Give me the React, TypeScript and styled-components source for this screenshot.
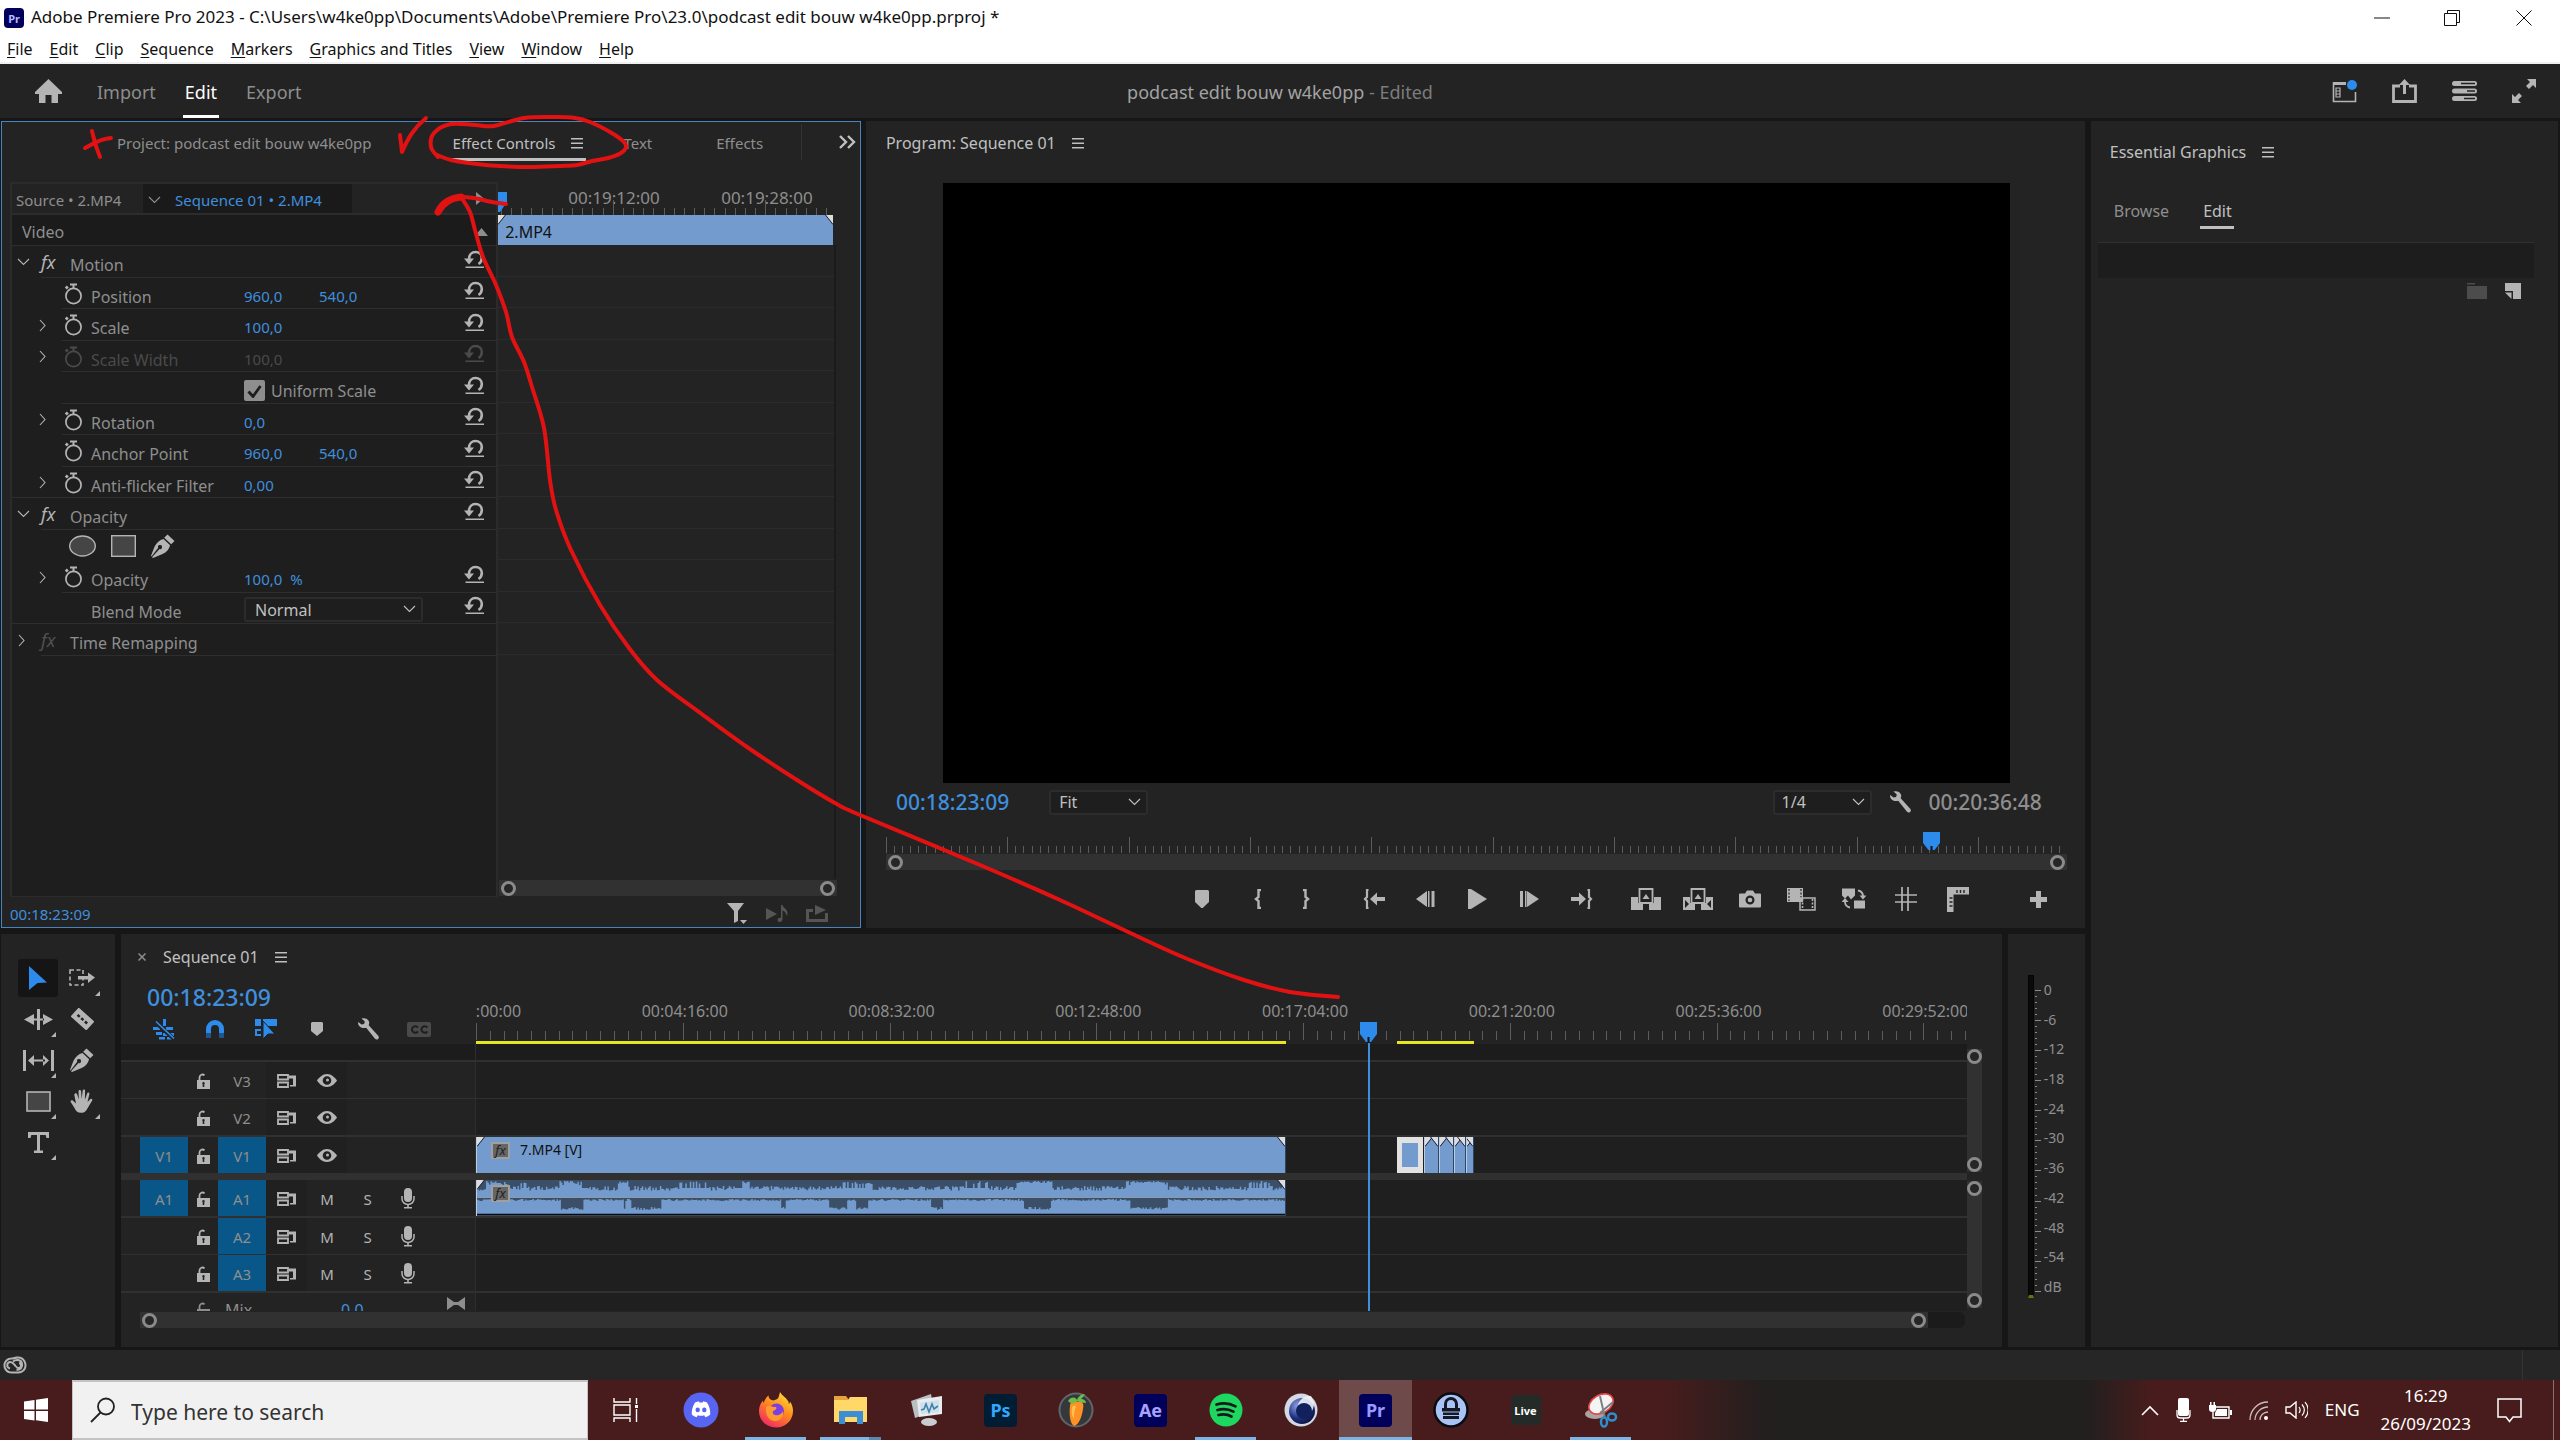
import React from "react";
import styled, { createGlobalStyle, css } from "styled-components";

const C = {
  gap: "#161616",
  panel: "#232323",
  deep: "#1e1e1e",
  line: "#2e2e2e",
  icon: "#b4b4b4",
  text: "#8e8e8e",
  bright: "#c0c0c0",
  blue: "#3f8fdf",
  play: "#2d8ceb",
  clip: "#739bcd",
  wave: "#3b5068",
  target: "#085788",
  thumb: "#313131",
  ring: "#8a8a8a",
};

const GlobalStyle = createGlobalStyle`
  * { box-sizing: border-box; }
  body { margin: 0; background: ${C.gap}; }
  body, button, input, select { font-family: "Noto Sans", "Open Sans", sans-serif; }
  button { border: 0; padding: 0; margin: 0; background: none; color: inherit; font-size: inherit; line-height: inherit; }
  svg { display: block; }
`;

/* ---------- shared parts ---------- */

const Page = styled.div`
  position: relative;
  display: flex;
  flex-direction: column;
  min-height: 100vh;
  font-size: 16px;
  line-height: 20px;
  color: ${C.text};
  white-space: nowrap;
  overflow: hidden;
`;

const Panel = styled.section`
  display: flex;
  flex-direction: column;
  background: ${C.panel};
  min-width: 0;
  min-height: 0;
`;

const IconBtn = styled.button<{ $w?: number; $h?: number; $color?: string }>`
  display: flex;
  align-items: center;
  justify-content: center;
  flex: none;
  width: ${(p) => p.$w ?? 52}px;
  height: ${(p) => p.$h ?? 30}px;
  color: ${(p) => p.$color ?? C.icon};
`;

type IconProps = { w: number; h: number; vb?: string; children: React.ReactNode };
const Icon = ({ w, h, vb, children }: IconProps) => (
  <svg width={w} height={h} viewBox={vb ?? `0 0 ${w} ${h}`} fill="currentColor" aria-hidden="true">
    {children}
  </svg>
);

const Burger = () => (
  <Icon w={12} h={12}>
    <path d="M0 1h12v1.500H0zM0 5.500h12V7H0zM0 10h12v1.500H0z" />
  </Icon>
);
const Chevron = ({ right }: { right?: boolean }) =>
  right ? (
    <Icon w={7} h={13}>
      <path d="M1 1l5 5.500-5 5.500" fill="none" stroke="currentColor" strokeWidth="1.100" />
    </Icon>
  ) : (
    <Icon w={13} h={8}>
      <path d="M1 1l5.500 5.500L12 1" fill="none" stroke="currentColor" strokeWidth="1.100" />
    </Icon>
  );
const Wrench = () => (
  <Icon w={22} h={22}>
    <path d="M4.500 0.500c3-1 6.500 0 7.500 3 .5 1.600 0 2.800-.3 3.700l9.500 10.500c1 1.200.8 2.400 0 3.200-1 .9-2.300.8-3.200-.2L9.200 9.700C7 10.600 3.500 10 2 7.800 1 6.300.9 5 1.300 4l3.200 2.600 2.600-.6.700-2.600z" />
  </Icon>
);
const Marker = () => (
  <Icon w={14} h={18}>
    <path d="M1.500 0h11a1.500 1.500 0 0 1 1.500 1.500V12l-5.500 5.300a2 2 0 0 1-3 0L0 12V1.500A1.500 1.500 0 0 1 1.500 0z" />
  </Icon>
);
const Pen = () => (
  <Icon w={24} h={24}>
    <path d="M16.500.500l7 6.500-3.300 3.300-7-6.500zM12.500 5l6.600 6.200c-1 4-3.500 6.800-7.500 8.800L2 24l-1-.8L8.500 15a2 2 0 1 0-1.300-1.200L.5 22.500 0 21.800l3.500-9C5.500 8.500 8.500 6 12.500 5z" />
  </Icon>
);
const FxGlyph = styled.span<{ $dim?: boolean }>`
  font-family: "Noto Sans", sans-serif;
  font-style: italic;
  font-size: 18px;
  color: ${(p) => (p.$dim ? "#505050" : C.icon)};
`;

const SelectBox = styled.span<{ $w: number; $pad: number }>`
  position: relative;
  display: inline-flex;
  flex: none;
  width: ${(p) => p.$w}px;
  height: 25px;
  color: ${C.bright};
  select {
    width: 100%;
    appearance: none;
    border: 2px solid #2c2c2c;
    border-radius: 3px;
    background: ${C.deep};
    color: ${C.bright};
    font-size: 16px;
    line-height: 20px;
    padding: 0 0 0 ${(p) => p.$pad}px;
  }
  svg {
    position: absolute;
    right: 7px;
    top: 8px;
    pointer-events: none;
  }
`;
const DropDown = ({ w, pad, label, value }: { w: number; pad: number; label: string; value: string }) => (
  <SelectBox $w={w} $pad={pad}>
    <select aria-label={label} defaultValue={value}>
      <option>{value}</option>
    </select>
    <Chevron />
  </SelectBox>
);

/* zoom scroll bars with a ring at each end */
const HBar = styled.div<{ $used?: string }>`
  display: flex;
  height: 16px;
  border-radius: 6px;
  background: #1b1b1b;
  > span {
    display: flex;
    justify-content: space-between;
    align-items: center;
    width: ${(p) => p.$used ?? "100%"};
    padding: 0 2px;
    background: ${C.thumb};
  }
`;
const VBar = styled.div<{ $h: number }>`
  display: flex;
  flex-direction: column;
  justify-content: space-between;
  align-items: center;
  width: 15px;
  height: ${(p) => p.$h}px;
  background: ${C.thumb};
`;
const Ring = styled.i`
  flex: none;
  width: 15px;
  height: 15px;
  border: 3px solid ${C.ring};
  border-radius: 50%;
  background: #262626;
`;

/* tick marks; major ticks at every `per`-th position */
const TickSvg = styled.svg`
  width: 100%;
  height: 17px;
  overflow: hidden;
  stroke: #5c5c5c;
  shape-rendering: crispEdges;
`;
const Ticks = ({ start, step, per, small, tall, phase = 0 }: { start: number; step: number; per: number; small: number; tall: number; phase?: number }) => {
  const lines: React.ReactNode[] = [];
  for (let i = 0; start + i * step <= 100; i++) {
    const x = `${start + i * step}%`;
    const top = (i + phase) % per === 0 ? 17 - tall : 17 - small;
    lines.push(<line key={i} x1={x} x2={x} y1={top} y2={17} />);
  }
  return <TickSvg>{lines}</TickSvg>;
};

/* ---------- window title and menus ---------- */

const WindowBar = styled.header`
  background: #fff;
  color: #111;
  border-bottom: 2px solid #f0f0f0;
`;
const TitleRow = styled.div`
  display: flex;
  align-items: center;
  height: 36px;
  padding-left: 4px;
`;
const TitleText = styled.h1`
  margin: 0 auto 2px 7px;
  font-size: 17px;
  font-weight: 400;
`;
const AppBadge = styled.span<{ $size: number; $bg: string; $fg: string; $font: number }>`
  display: flex;
  align-items: center;
  justify-content: center;
  width: ${(p) => p.$size}px;
  height: ${(p) => p.$size}px;
  border-radius: 4px;
  background: ${(p) => p.$bg};
  color: ${(p) => p.$fg};
  font-size: ${(p) => p.$font}px;
  font-weight: 700;
  line-height: 1;
`;
const MenuRow = styled.nav`
  display: flex;
  gap: 17px;
  height: 26px;
  padding-left: 7px;
  font-size: 16px;
  line-height: 26px;
  u { text-underline-offset: 2px; }
`;

const menus: [string, string][] = [
  ["F", "ile"], ["E", "dit"], ["C", "lip"], ["S", "equence"], ["M", "arkers"],
  ["G", "raphics and Titles"], ["V", "iew"], ["W", "indow"], ["H", "elp"],
];

/* ---------- application header ---------- */

const AppHeader = styled.header`
  display: grid;
  grid-template-columns: 1fr auto 1fr;
  align-items: center;
  height: 57px;
  border-bottom: 3px solid ${C.gap};
  background: ${C.panel};
  font-size: 18px;
`;
const ModeTabs = styled.nav`
  display: flex;
  align-items: center;
  gap: 25px;
  height: 54px;
  padding-left: 35px;
`;
const ModeTab = styled.button<{ $on?: boolean }>`
  height: 54px;
  padding: 4px 2px 0;
  border-bottom: 3px solid ${(p) => (p.$on ? "#fff" : "transparent")};
  color: ${(p) => (p.$on ? "#fff" : C.text)};
`;
const HomeBtn = styled.button`
  color: ${C.icon};
  padding-right: 8px;
`;
const DocTitle = styled.div`
  color: #a2a2a2;
  padding-top: 2px;
  span { color: #7c7c7c; }
`;
const HeaderIcons = styled.div`
  display: flex;
  justify-content: flex-end;
  gap: 8px;
  padding-right: 10px;
`;

/* ---------- workspace ---------- */

const Workspace = styled.main`
  display: flex;
  flex: 1;
  gap: 6px;
  padding: 0 2px 3px 1px;
`;
const MainColumn = styled.div`
  display: flex;
  flex-direction: column;
  flex: 2083 1 0;
  gap: 6px;
  min-width: 0;
`;
const TopRow = styled.div`
  display: flex;
  flex: 1;
  gap: 5px;
`;
const BottomRow = styled.div`
  display: flex;
  flex: none;
  gap: 6px;
`;

const TabRow = styled.div<{ $pad: number; $h?: number; $size?: number }>`
  display: flex;
  align-items: center;
  flex: none;
  height: ${(p) => p.$h ?? 43}px;
  padding-left: ${(p) => p.$pad}px;
  font-size: ${(p) => p.$size ?? 16}px;
`;
const PanelTab = styled.button<{ $on?: boolean; $ml?: number; $line?: boolean }>`
  display: flex;
  align-items: center;
  gap: 16px;
  margin-left: ${(p) => p.$ml ?? 0}px;
  height: 36px;
  padding: 0 3px;
  border-bottom: 3px solid ${(p) => (p.$line ? C.bright : "transparent")};
  border-top: 3px solid transparent;
  color: ${(p) => (p.$on ? C.bright : C.text)};
`;
const Overflow = styled.button`
  display: flex;
  align-items: center;
  justify-content: flex-end;
  align-self: flex-start;
  margin: 2px 4px 0 auto;
  width: 55px;
  height: 36px;
  border-left: 1px solid #333;
  color: ${C.bright};
`;

/* effect controls */

const EffectPanel = styled(Panel)`
  flex: 858 1 0;
  border: 1px solid #4a84bf;
`;
const EffectBody = styled.div`
  display: flex;
  flex: 1;
  margin: 18px 7px 0 8px;
`;
const PropPane = styled.div`
  display: flex;
  flex-direction: column;
  flex: 486 1 0;
  border: 2px solid #2b2b2b;
  border-bottom-width: 1px;
  background: ${C.deep};
`;
const SourceRow = styled.div`
  display: flex;
  align-items: center;
  height: 31px;
  flex: none;
  background: ${C.panel};
  border-bottom: 2px solid #2c2c2c;
  padding-right: 12px;
  font-size: 15px;
`;
const SourceLabel = styled.span`
  width: 131px;
  padding: 2px 0 0 4px;
`;
const SeqLabel = styled.button`
  display: flex;
  align-items: center;
  gap: 14px;
  width: 209px;
  height: 29px;
  margin-right: auto;
  padding: 2px 0 0 5px;
  background: #1a1a1a;
  color: ${C.blue};
  svg { color: ${C.text}; }
`;
const VideoRow = styled.div`
  display: flex;
  align-items: center;
  justify-content: space-between;
  flex: none;
  height: 31px;
  padding: 4px 8px 0 10px;
  background: #1b1b1b;
  border-bottom: 1px solid ${C.line};
`;
const PropRow = styled.div<{ $top?: boolean; $inset: number; $dim?: boolean }>`
  display: grid;
  grid-template-columns: ${(p) => (p.$top ? "29px 29px 1fr 32px" : "52px 27px 153px 75px 1fr 32px")};
  align-items: center;
  flex: none;
  height: 32px;
  &:nth-child(even) { height: 31px; }
  color: ${(p) => (p.$dim ? "#4a4a4a" : C.text)};
  background: linear-gradient(${C.line}, ${C.line}) no-repeat ${(p) => p.$inset}px 100% / 100% 1px;
`;
const WatchCell = styled.span<{ $dim?: boolean }>`
  color: ${(p) => (p.$dim ? "#4a4a4a" : C.icon)};
`;
const Disclose = styled.button<{ $pl: number }>`
  padding-left: ${(p) => p.$pl}px;
  color: ${C.icon};
`;
const PropLabel = styled.span`
  padding-top: 6px;
`;
const Value = styled.button<{ $dim?: boolean }>`
  padding-top: 4px;
  text-align: left;
  font-size: 15px;
  color: ${(p) => (p.$dim ? "#4a4a4a" : C.blue)};
  i { margin-left: 8px; font-style: normal; }
`;
const Reset = styled.button<{ $dim?: boolean }>`
  grid-column: -2;
  padding-bottom: 6px;
  color: ${(p) => (p.$dim ? "#4a4a4a" : C.icon)};
`;
const ShapeTools = styled.div`
  grid-column: 2 / span 3;
  display: flex;
  align-items: center;
  gap: 15px;
  padding-left: 5px;
  color: ${C.icon};
`;
const CheckLabel = styled.label`
  grid-column: 4 / span 2;
  position: relative;
  display: flex;
  align-items: center;
  gap: 6px;
  padding-top: 5px;
  input {
    appearance: none;
    width: 21px;
    height: 21px;
    margin: 0;
    border-radius: 2px;
    background: #8e8e8e;
  }
  svg { position: absolute; left: 3px; top: 9px; color: #1e1e1e; pointer-events: none; }
`;
const BlendCell = styled.span`
  grid-column: 4 / span 2;
  padding-top: 2px;
`;

const KeyPane = styled.div`
  display: flex;
  flex-direction: column;
  flex: 356 1 0;
  min-width: 0;
`;
const KeyRuler = styled.div`
  position: relative;
  display: flex;
  flex-direction: column;
  justify-content: space-between;
  height: 31px;
  margin-right: 18px;
  padding-top: 6px;
`;
const LabelStrip = styled.div<{ $w: string; $shift: string; $size: number }>`
  display: flex;
  overflow-x: clip;
  overflow-y: visible;
  height: 20px;
  font-size: ${(p) => p.$size}px;
  line-height: 20px;
  span {
    flex: none;
    width: ${(p) => p.$w};
    text-align: center;
  }
  span:first-child { margin-left: ${(p) => p.$shift}; }
`;
const RulerTicks = styled.div`
  margin-top: -10px;
`;
const KeyHead = styled.svg`
  position: absolute;
  left: 0;
  top: 10px;
`;
const ClipBar = styled.div`
  position: relative;
  display: flex;
  align-items: center;
  height: 30px;
  margin: 2px 20px 0 0;
  padding: 4px 0 0 7px;
  background: ${C.clip};
  color: #111;
`;
const KeyRows = styled.div`
  flex: 1;
  margin-right: 17px;
  border-right: 2px solid #1b1b1b;
`;
const KeyRow = styled.div`
  height: 32px;
  &:nth-child(even) { height: 31px; }
  border-bottom: 1px solid #2b2b2b;
`;
const KeyScroll = styled.div`
  margin: 1px 16px 1px 1px;
`;
const EffectFoot = styled.footer`
  display: flex;
  align-items: center;
  flex: none;
  height: 30px;
  padding: 3px 23px 0 8px;
  color: ${C.blue};
  font-size: 15px;
  > span { margin-right: auto; padding-top: 1px; }
`;

/* program monitor */

const ProgramPanel = styled(Panel)`
  flex: 1219 1 0;
`;
const Screen = styled.div`
  flex: 1;
  margin: 19px 75px 0 77px;
  background: #000;
`;
const MonitorRow = styled.div`
  display: flex;
  align-items: center;
  height: 41px;
  padding: 0 43px 3px 30px;
`;
const Code = styled.span<{ $size: number; $on?: boolean }>`
  font-size: ${(p) => p.$size}px;
  line-height: 28px;
  font-weight: 500;
  color: ${(p) => (p.$on ? C.blue : C.text)};
`;
const Spacer = styled.span<{ $w?: number }>`
  flex: ${(p) => (p.$w ? `0 0 ${p.$w}px` : "1")};
`;
const ProgRuler = styled.div`
  position: relative;
  margin: 12px 18px 0 20px;
`;
const ProgHead = styled.svg`
  position: absolute;
  top: -4px;
  left: 87.800%;
`;
const ProgScroll = styled.div`
  margin: 1px 18px 0 20px;
`;
const Transport = styled.div`
  display: flex;
  align-items: center;
  height: 58px;
  padding-right: 20px;
`;

/* essential graphics */

const EssentialPanel = styled(Panel)`
  flex: 467 1 0;
`;
const SubTabs = styled.div`
  display: flex;
  gap: 29px;
  padding: 12px 0 0 20px;
`;
const SubTab = styled.button<{ $on?: boolean }>`
  height: 34px;
  padding: 0 2px 0 3px;
  border-bottom: 3px solid ${(p) => (p.$on ? C.bright : "transparent")};
  color: ${(p) => (p.$on ? C.bright : C.text)};
`;
const LayerBox = styled.div`
  height: 36px;
  margin: 13px 24px 0 7px;
  border-top: 1px solid #303030;
  background: #1d1d1d;
`;
const LayerTools = styled.div`
  display: flex;
  justify-content: flex-end;
  gap: 18px;
  padding: 5px 37px 0 0;
`;

/* tool panel */

const ToolPanel = styled(Panel)`
  flex: 0 0 114px;
  padding: 25px 12px 0 15px;
`;
const ToolGrid = styled.div`
  display: grid;
  grid-template-columns: 44px 44px;
  grid-auto-rows: 41px;
  justify-items: center;
`;
const Tool = styled.button<{ $on?: boolean; $more?: boolean }>`
  position: relative;
  display: flex;
  align-items: center;
  justify-content: center;
  width: 40px;
  height: 38px;
  border-radius: 3px;
  color: ${(p) => (p.$on ? C.play : C.icon)};
  background: ${(p) => (p.$on ? "#151515" : "none")};
  ${(p) =>
    p.$more &&
    css`
      &::after {
        content: "";
        position: absolute;
        right: 2px;
        bottom: 1px;
        border-style: solid;
        border-width: 0 0 5px 5px;
        border-color: transparent transparent ${C.icon} transparent;
      }
    `}
`;

/* timeline */

const TimelinePanel = styled(Panel)`
  flex: 1;
  padding-right: 20px;
`;
const TimeGrid = styled.div`
  display: grid;
  grid-template-columns: 355px 1fr 15px;
`;
const HeadTop = styled.div`
  height: 64px;
  padding-left: 17px;
`;
const HeadCode = styled.div`
  height: 34px;
  padding: 3px 0 0 9px;
`;
const HeadTools = styled.div`
  display: flex;
`;
const TimeRuler = styled.div`
  display: flex;
  flex-direction: column;
  height: 64px;
  padding-top: 21px;
`;
const TimeTicks = styled.div`
  margin-top: 2px;
`;
const RenderBar = styled.div`
  position: relative;
  height: 3px;
  margin-top: 1px;
`;
const Rendered = styled.i`
  position: absolute;
  top: 0;
  height: 3px;
  background: #e6e61e;
`;
const TrackHeads = styled.div`
  height: 267px;
  overflow: hidden;
  border-right: 1px solid ${C.line};
`;
const TrackArea = styled.div`
  position: relative;
  height: 267px;
  background: #1f1f1f;
`;
const Band = styled.div`
  height: 16px;
  background: #1c1c1c;
`;
const Track = styled.div<{ $line: number }>`
  position: relative;
  display: flex;
  align-items: stretch;
  height: ${(p) => 36 + p.$line}px;
  border-top: ${(p) => p.$line}px solid #303030;
`;
const MixTrack = styled.div`
  height: 20px;
  overflow: hidden;
  border-top: 2px solid #303030;
`;
const MixInner = styled.div`
  display: grid;
  grid-template-columns: 28px 116px 106px 18px;
  align-items: center;
  justify-items: start;
  padding-left: 76px;
  height: 34px;
  > :nth-child(3) { color: ${C.blue}; }
  > :nth-child(4) { align-self: start; margin-top: 4px; }
`;
const Split = styled.div`
  height: 7px;
  background: #303030;
`;
const HeadCell = styled.button<{ $w: number; $on?: boolean; $dark?: boolean }>`
  display: flex;
  align-items: center;
  justify-content: center;
  width: ${(p) => p.$w}px;
  font-size: 15px;
  padding-top: 1px;
  background: ${(p) => (p.$on ? C.target : p.$dark ? "#202020" : "transparent")};
  color: ${(p) => (p.$w === 48 ? C.text : C.icon)};
`;
const HeadRow = styled(Track)`
  padding-left: 19px;
`;
const Clip = styled.div<{ $picked?: boolean; $tall?: boolean }>`
  position: absolute;
  top: 0;
  display: flex;
  gap: 10px;
  height: ${(p) => (p.$tall ? 38 : 36)}px;
  overflow: hidden;
  background: ${C.clip};
  border-left: 1px solid #b9cde6;
  border-right: 1px solid #2c4766;
  color: #111;
  ${(p) =>
    p.$picked &&
    css`
      border: 7px solid #e2e2e2;
      border-width: 6px 5px;
    `}
`;
const Corner = styled.svg<{ $right?: boolean }>`
  position: absolute;
  top: 0;
  ${(p) => (p.$right ? "right: 0; transform: scaleX(-1);" : "left: 0;")}
`;
const FxBadge = styled.span`
  z-index: 1;
  display: flex;
  align-items: center;
  justify-content: center;
  width: 19px;
  height: 17px;
  margin: 5px 0 0 14px;
  border: 2px solid #a0a0a0;
  background: #666;
  color: #222;
  font: italic 13px/13px "Noto Sans", sans-serif;
`;
const ClipName = styled.span`
  padding-top: 3px;
  font-size: 14px;
`;
const Wave = styled.svg`
  position: absolute;
  inset: 0;
  width: 100%;
  height: 38px;
`;
const Playhead = styled.i`
  position: absolute;
  top: -22px;
  bottom: 0;
  width: 17px;
  margin-left: -8px;
  display: flex;
  flex-direction: column;
  align-items: center;
  &::after {
    content: "";
    flex: 1;
    width: 2px;
    background: ${C.blue};
  }
`;
const VBars = styled.div`
  display: flex;
  flex-direction: column;
  gap: 9px;
  padding-top: 5px;
`;
const TimeScroll = styled.div`
  margin: 1px 17px 0 19px;
`;

/* audio meter */

const MeterPanel = styled(Panel)`
  flex: 0 0 77px;
  flex-direction: row;
  padding: 41px 0 49px 20px;
`;
const MeterBar = styled.div`
  width: 6px;
  height: 323px;
  background: #0a0a0a;
  border: 1px solid #050505;
  border-bottom: 3px solid #6e6e14;
`;
const MeterTicks = styled.svg`
  flex: none;
  width: 9px;
  height: 323px;
  margin-left: 1px;
  stroke: #8a8a8a;
  shape-rendering: crispEdges;
`;
const MeterLabels = styled.ol`
  display: flex;
  flex-direction: column;
  justify-content: space-between;
  list-style: none;
  height: 320px;
  margin: 0;
  padding: 5px 0 0 0;
  font-size: 14px;
  line-height: 20px;
  li { height: 18px; }
`;

/* status and task bar */

const StatusBar = styled.div`
  display: flex;
  align-items: center;
  justify-content: space-between;
  height: 30px;
  flex: none;
  padding: 0 37px 0 3px;
  background: #262626;
  color: ${C.icon};
  &::after { content: ""; width: 1px; height: 30px; background: #333; }
`;
const TaskBar = styled.footer`
  display: flex;
  flex: none;
  height: 60px;
  color: #fff;
  background: linear-gradient(90deg, #481c1c 0 65%, #221f1f 69% 81.500%, #481c1c 84%);
`;
const StartBtn = styled(IconBtn)`
  width: 72px;
  height: 60px;
  color: #fff;
`;
const SearchBox = styled.label`
  display: flex;
  align-items: center;
  gap: 15px;
  width: 516px;
  padding-left: 17px;
  background: #f1f1f1;
  border: 2px solid #c4c4c4;
  border-width: 2px 1px;
  color: #222;
  input {
    flex: 1;
    border: 0;
    padding: 4px 0 0;
    background: none;
    outline: 0;
    font-size: 21px;
    line-height: 28px;
  }
  input::placeholder { color: #333; opacity: 1; }
`;
const TaskIcon = styled.button<{ $open?: boolean; $active?: boolean; $stack?: boolean }>`
  position: relative;
  display: flex;
  align-items: center;
  justify-content: center;
  width: 75px;
  background: ${(p) => (p.$active ? "linear-gradient(#6e4a4a, #6e4a4a) center / 73px 60px no-repeat" : "none")};
  ${(p) =>
    p.$open &&
    css`
      &::after {
        content: "";
        position: absolute;
        bottom: 0;
        left: ${p.$active ? 1 : 7}px;
        right: ${p.$active ? 1 : 7}px;
        height: 3px;
        background: ${p.$stack ? "linear-gradient(90deg, #7db4e6 0 80%, #5c88b0 80%)" : "#7db4e6"};
      }
    `}
`;
const Tray = styled.div`
  display: flex;
  align-items: center;
  gap: 17px;
  margin-left: auto;
  padding-right: 6px;
  font-size: 17px;
`;
const Clock = styled.time`
  display: grid;
  justify-items: center;
  margin: 0 9px 0 4px;
  line-height: 28px;
`;
const DesktopEdge = styled.i`
  width: 1px;
  height: 60px;
  margin-left: 14px;
  background: #8a7070;
`;

const Ink = styled.svg`
  position: absolute;
  inset: 0;
  width: 100%;
  height: 100%;
  pointer-events: none;
  fill: none;
  stroke: #e21212;
  stroke-width: 4;
  stroke-linecap: round;
  stroke-linejoin: round;
`;

/* ---------- small icons ---------- */

const Stopwatch = () => (
  <Icon w={20} h={22}>
    <circle cx="9.500" cy="13" r="7.600" fill="none" stroke="currentColor" strokeWidth="1.700" />
    <path d="M6 0.500h7v2h-2.500v3h-2v-3H6zM0.800 4.500l2-2 2 2-2 2z" />
  </Icon>
);
const ResetIcon = () => (
  <Icon w={20} h={19}>
    <path d="M5 9C5 4.500 8 2 11.500 2c3.700 0 6.300 2.500 6.300 6 0 2.500-1.300 4.800-3.300 6" fill="none" stroke="currentColor" strokeWidth="2.600" />
    <path d="M0 8.500h10L5 14.500zM1.500 16.500H20v1.500H1.500z" />
  </Icon>
);
const LockIcon = () => (
  <Icon w={13} h={16}>
    <path d="M2.500 7V4.500a3 3 0 0 1 5-2.200" fill="none" stroke="currentColor" strokeWidth="1.800" />
    <path fillRule="evenodd" d="M0 7h13v9H0zM6.500 9a1.300 1.300 0 0 0-.8 2.300V14h1.600v-2.700A1.300 1.300 0 0 0 6.500 9z" />
  </Icon>
);
const SyncIcon = () => (
  <Icon w={19} h={14}>
    <path d="M1 1h10v4.500H1zM1 8.500h10V13H1z" fill="none" stroke="currentColor" strokeWidth="1.800" />
    <path d="M11.500 1.500H19v11h-6V11h3V4.500h-4.500z" />
  </Icon>
);
const EyeIcon = () => (
  <Icon w={20} h={13}>
    <path fillRule="evenodd" d="M10 0c4.500 0 8 3.500 10 6.500C18 9.500 14.500 13 10 13S2 9.500 0 6.500C2 3.500 5.500 0 10 0zm0 2.200a4.300 4.300 0 1 0 0 8.600 4.300 4.300 0 0 0 0-8.600z" />
    <circle cx="10.500" cy="6" r="1.500" />
  </Icon>
);
const MicIcon = () => (
  <Icon w={14} h={21}>
    <rect x="3" y="0" width="8" height="14" rx="4" />
    <path d="M1 8v3a6 5.500 0 0 0 12 0V8" fill="none" stroke="currentColor" strokeWidth="1.500" />
    <path d="M6.200 16h1.600v3H11v1.500H3V19h3.200z" />
  </Icon>
);

/* ---------- data ---------- */

type Prop = { name: string; values: string[]; open?: boolean; dim?: boolean; inset: number; unit?: string };
const motion: Prop[] = [
  { name: "Position", values: ["960,0", "540,0"], inset: 50 },
  { name: "Scale", values: ["100,0"], open: true, inset: 50 },
  { name: "Scale Width", values: ["100,0"], open: true, dim: true, inset: 50 },
];
const rotation: Prop[] = [
  { name: "Rotation", values: ["0,0"], open: true, inset: 50 },
  { name: "Anchor Point", values: ["960,0", "540,0"], inset: 50 },
  { name: "Anti-flicker Filter", values: ["0,00"], open: true, inset: 0 },
];

const PropLine = ({ p }: { p: Prop }) => (
  <PropRow $inset={p.inset} $dim={p.dim}>
    {p.open ? (
      <Disclose $pl={27} aria-label={`Expand ${p.name}`}>
        <Chevron right />
      </Disclose>
    ) : (
      <span />
    )}
    <WatchCell $dim={p.dim}><Stopwatch /></WatchCell>
    <PropLabel>{p.name}</PropLabel>
    <Value $dim={p.dim}>{p.values[0]}{p.unit && <i>{p.unit}</i>}</Value>
    {p.values[1] ? <Value>{p.values[1]}</Value> : <span />}
    <Reset $dim={p.dim} aria-label={`Reset ${p.name}`}>
      <ResetIcon />
    </Reset>
  </PropRow>
);

const GroupLine = ({ name, dim, inset, closed }: { name: string; dim?: boolean; inset: number; closed?: boolean }) => (
  <PropRow $top $inset={inset}>
    <Disclose $pl={closed ? 6 : 5} aria-label={`Toggle ${name}`}>
      <Chevron right={closed} />
    </Disclose>
    <FxGlyph $dim={dim}>fx</FxGlyph>
    <PropLabel>{name}</PropLabel>
    {!dim && (
      <Reset aria-label={`Reset ${name}`}>
        <ResetIcon />
      </Reset>
    )}
  </PropRow>
);

/* audio peaks for the clip, drawn as narrow bars */
const inRanges = (x: number, ranges: number[][]) => ranges.some(([a, b]) => x >= a && x <= b);
const buildWave = () => {
  let seed = 41;
  const rnd = () => {
    seed = (seed * 16807) % 2147483647;
    return seed / 2147483647;
  };
  const calm = [[8, 30], [84, 104], [140, 150], [540, 575], [650, 690]];
  const loudLow = [[84, 105], [146, 148], [154, 183], [304, 308], [352, 369], [379, 390], [454, 465], [547, 574], [654, 690]];
  let d = "";
  for (let x = 0; x < 809; x += 1.5) {
    const burst = Math.sin(x / 9) + Math.sin(x / 23 + 1) > -0.7;
    const up = inRanges(x, calm) ? 1 + rnd() * (rnd() > 0.7 ? 5 : 2) : burst ? 6 + rnd() * 4.5 : rnd() > 0.5 ? 8 : 1 + rnd() * 3;
    const low = inRanges(x, loudLow) ? 9 + rnd() * 3 : 1 + rnd() * 2;
    d += `M${x} 0h1.500v${up.toFixed(1)}h-1.500zM${x} 18h1.500v${low.toFixed(1)}h-1.500z`;
  }
  return d;
};
const waveD = buildWave();

/* freehand marker strokes, smoothed through their points */
const smooth = (pts: number[][]) => {
  let d = `M${pts[0][0]} ${pts[0][1]}`;
  for (let i = 0; i < pts.length - 1; i++) {
    const a = pts[Math.max(i - 1, 0)];
    const b = pts[i];
    const c = pts[i + 1];
    const e = pts[Math.min(i + 2, pts.length - 1)];
    d += `C${(b[0] + (c[0] - a[0]) / 6).toFixed(1)} ${(b[1] + (c[1] - a[1]) / 6).toFixed(1)} ${(c[0] - (e[0] - b[0]) / 6).toFixed(1)} ${(c[1] - (e[1] - b[1]) / 6).toFixed(1)} ${c[0]} ${c[1]}`;
  }
  return d;
};
const loopStroke = smooth([
  [438, 157], [431, 147], [434, 133], [451, 124], [475, 125], [494, 126], [524, 118], [557, 117], [575, 118],
  [590, 122], [610, 132], [623, 141], [626, 147], [621, 153], [608, 158], [592, 161], [577, 165], [560, 166],
  [530, 167], [500, 166], [477, 164], [451, 160], [437, 155],
]);
const longStroke = smooth([
  [461, 197], [470, 212], [475, 230], [483, 257], [496, 285], [506, 312], [512, 337], [524, 362], [532, 387],
  [544, 428], [550, 480], [556, 510], [571, 550], [600, 605], [629, 648], [657, 680], [703, 715], [747, 747],
  [797, 780], [835, 803], [860, 815], [980, 865], [1060, 900], [1143, 939], [1190, 960], [1244, 980], [1290, 992], [1338, 997],
]);

const ClipCorner = ({ right }: { right?: boolean }) => (
  <Corner $right={right} width="8" height="10" viewBox="0 0 8 10" aria-hidden="true">
    <path d="M0 0h7L0 9z" fill="#ddd" />
    <path d="M7.500 0L0 9.500" stroke="#223" />
  </Corner>
);

const smallClips = [
  { left: 61.75, width: 1.8, picked: true },
  { left: 63.6, width: 1 },
  { left: 64.6, width: 1 },
  { left: 65.6, width: 0.8 },
  { left: 66.4, width: 0.55 },
];

const TrackHead = ({ name, line, source, audio, on }: { name: string; line: number; source?: boolean; audio?: boolean; on?: boolean }) => (
  <HeadRow $line={line}>
    <HeadCell $w={48} $on={source} aria-label={`Source patch ${name}`}>{source ? name : ""}</HeadCell>
    <HeadCell $w={30} aria-label={`Lock ${name}`}><LockIcon /></HeadCell>
    <HeadCell $w={48} $on={on}>{name}</HeadCell>
    <HeadCell $w={41} $dark aria-label={`Sync lock ${name}`}><SyncIcon /></HeadCell>
    {audio ? (
      <>
        <HeadCell $w={40}>M</HeadCell>
        <HeadCell $w={41}>S</HeadCell>
        <HeadCell $w={40} aria-label={`Record ${name}`}><MicIcon /></HeadCell>
      </>
    ) : (
      <HeadCell $w={40} $dark aria-label={`Show ${name}`}><EyeIcon /></HeadCell>
    )}
  </HeadRow>
);

const meterTicks = Array.from({ length: 51 }, (_, i) => ({ y: 15 + i * 6.03, major: i % 5 === 0 }));

/* ---------- sections ---------- */

const EffectControls = () => (
  <EffectPanel>
    <TabRow $pad={112} $h={42} $size={15}>
      <PanelTab>Project: podcast edit bouw w4ke0pp</PanelTab>
      <PanelTab $on $line $ml={75}>Effect Controls <Burger /></PanelTab>
      <PanelTab $ml={34}>Text</PanelTab>
      <PanelTab $ml={58}>Effects</PanelTab>
      <Overflow aria-label="More panels">
        <Icon w={17} h={14}>
          <path d="M1 1l6 6-6 6M9 1l6 6-6 6" fill="none" stroke="currentColor" strokeWidth="2.400" />
        </Icon>
      </Overflow>
    </TabRow>
    <EffectBody>
      <PropPane>
        <SourceRow>
          <SourceLabel>Source • 2.MP4</SourceLabel>
          <SeqLabel><Chevron />Sequence 01 • 2.MP4</SeqLabel>
          <Icon w={8} h={13}><path d="M0 0l8 6.500L0 13z" /></Icon>
        </SourceRow>
        <VideoRow>
          <span>Video</span>
          <Icon w={13} h={8}><path d="M0 8l6.500-8L13 8z" /></Icon>
        </VideoRow>
        <div>
          <GroupLine name="Motion" inset={29} />
          {motion.map((p) => <PropLine key={p.name} p={p} />)}
          <PropRow $inset={50}>
            <CheckLabel>
              <input type="checkbox" defaultChecked />
              <Icon w={15} h={14}><path d="M1.500 7.500l4.500 5L13.500 2" fill="none" stroke="currentColor" strokeWidth="2.800" /></Icon>
              Uniform Scale
            </CheckLabel>
            <Reset aria-label="Reset Uniform Scale"><ResetIcon /></Reset>
          </PropRow>
          {rotation.map((p) => <PropLine key={p.name} p={p} />)}
          <GroupLine name="Opacity" inset={29} />
          <PropRow $inset={1000}>
            <ShapeTools>
              <Icon w={27} h={22}><ellipse cx="13.500" cy="11" rx="12.800" ry="10" fill="#454545" stroke="currentColor" strokeWidth="1.400" /></Icon>
              <Icon w={25} h={22}><rect x="0.700" y="0.700" width="23.600" height="20.600" fill="#454545" stroke="currentColor" strokeWidth="1.400" /></Icon>
              <Pen />
            </ShapeTools>
          </PropRow>
          <PropLine p={{ name: "Opacity", values: ["100,0"], unit: "%", open: true, inset: 50 }} />
          <PropRow $inset={0}>
            <span /><span />
            <PropLabel>Blend Mode</PropLabel>
            <BlendCell><DropDown w={179} pad={9} label="Blend Mode" value="Normal" /></BlendCell>
            <Reset aria-label="Reset Blend Mode"><ResetIcon /></Reset>
          </PropRow>
          <GroupLine name="Time Remapping" dim closed inset={29} />
        </div>
      </PropPane>
      <KeyPane>
        <KeyRuler>
          <LabelStrip $w="45.400%" $shift="-33.700%" $size={17}>
            <span>00:18:56:00</span><span>00:19:12:00</span><span>00:19:28:00</span>
          </LabelStrip>
          <RulerTicks><Ticks start={1} step={3.02} per={15} phase={4} small={7} tall={15} /></RulerTicks>
          <KeyHead width="9" height="20" viewBox="0 0 9 20"><path d="M0 0h9v10L2 20H0z" fill={C.play} /></KeyHead>
        </KeyRuler>
        <ClipBar>2.MP4<ClipCorner /><ClipCorner right /></ClipBar>
        <KeyRows>{Array.from({ length: 13 }, (_, i) => <KeyRow key={i} />)}</KeyRows>
        <KeyScroll><HBar><span><Ring /><Ring /></span></HBar></KeyScroll>
      </KeyPane>
    </EffectBody>
    <EffectFoot>
      <span>00:18:23:09</span>
      <IconBtn $w={40} aria-label="Filter properties">
        <Icon w={20} h={22}><path d="M0 0h17l-6 8v10l-4 2V8zM13 17h7l-3.500 4z" /></Icon>
      </IconBtn>
      <IconBtn $w={40} $color="#555" aria-label="Play audio">
        <Icon w={22} h={17}><path d="M0 3l11 6-11 6zM15 0h1.500c.5 3 5.500 4 5 9l-1.500 2c.5-3-1-4.500-3.500-5.500V14c0 4-5 3.500-5 1 0-1.500 2-2.500 3.500-2z" /></Icon>
      </IconBtn>
      <IconBtn $w={40} $color="#555" aria-label="Export frame">
        <Icon w={22} h={17}><path d="M0 4h7v3H3v7h16V8h3v9H0zM9 0l11 5-11 5z" /></Icon>
      </IconBtn>
    </EffectFoot>
  </EffectPanel>
);

const ProgramMonitor = () => (
  <ProgramPanel>
    <TabRow $pad={17}><PanelTab $on>Program: Sequence 01 <Burger /></PanelTab></TabRow>
    <Screen />
    <MonitorRow>
      <Code $size={21} $on>00:18:23:09</Code>
      <Spacer $w={40} />
      <DropDown w={99} pad={8} label="Zoom level" value="Fit" />
      <Spacer />
      <DropDown w={99} pad={7} label="Playback resolution" value="1/4" />
      <IconBtn $w={57} aria-label="Settings"><Wrench /></IconBtn>
      <Code $size={21}>00:20:36:48</Code>
    </MonitorRow>
    <ProgRuler>
      <Ticks start={0.04} step={0.685} per={15} small={7} tall={16} />
      <ProgHead width="17" height="18" viewBox="0 0 17 18"><path d="M0 0h17v11l-5.500 7h-6L0 11z" fill={C.play} /><path d="M8.500 14v4" stroke="#111" strokeWidth="2" /></ProgHead>
    </ProgRuler>
    <ProgScroll><HBar><span><Ring /><Ring /></span></HBar></ProgScroll>
    <Transport>
      <Spacer />
      <IconBtn aria-label="Add marker"><Marker /></IconBtn>
      <Spacer $w={6} />
      <IconBtn $w={48} aria-label="Mark in"><Icon w={8} h={20}><path d="M7 1H4.500v7L2 10l2.500 2v7H7" fill="none" stroke="currentColor" strokeWidth="2.400" /></Icon></IconBtn>
      <IconBtn $w={48} aria-label="Mark out"><Icon w={8} h={20}><path d="M1 1h2.500v7L6 10l-2.500 2v7H1" fill="none" stroke="currentColor" strokeWidth="2.400" /></Icon></IconBtn>
      <Spacer $w={18} />
      <IconBtn aria-label="Go to in"><Icon w={22} h={20}><path d="M5.500 1H4v7L2 10l2 2v7h1.500" fill="none" stroke="currentColor" strokeWidth="2.200" /><path d="M7 10l7-6.500V8h8v4h-8v4.500z" /></Icon></IconBtn>
      <IconBtn aria-label="Step back"><Icon w={19} h={16}><path d="M0 8L11 0v16zM12 0h1.500v16H12zM15.500 0h3v16h-3z" /></Icon></IconBtn>
      <IconBtn aria-label="Play"><Icon w={19} h={20}><path d="M0 0h3l16 10L3 20H0z" /></Icon></IconBtn>
      <IconBtn aria-label="Step forward"><Icon w={19} h={16}><path d="M19 8L7 0v16zM0 0h3v16H0zM5 0h1.500v16H5z" /></Icon></IconBtn>
      <IconBtn aria-label="Go to out"><Icon w={22} h={20}><path d="M16.500 1H18v7l2 2-2 2v7h-1.500" fill="none" stroke="currentColor" strokeWidth="2.200" /><path d="M15 10L8 3.500V8H0v4h8v4.500z" /></Icon></IconBtn>
      <Spacer $w={12} />
      <IconBtn aria-label="Lift"><Icon w={30} h={22}><path d="M0 9h7v6h16V9h7v13H18v-6h-6v6H0z" /><path d="M8.500 1h13v14h-13z" fill="#232323" stroke="currentColor" strokeWidth="1.800" /><path d="M11.500 11L15 6l3.500 5z" /></Icon></IconBtn>
      <IconBtn aria-label="Extract"><Icon w={30} h={22}><path fillRule="evenodd" d="M0 9h7v6h16V9h7v13H18v-6h-6v6H0zM2 12l4 4-4 4zM28 12l-4 4 4 4z" /><path d="M8.500 1h13v14h-13z" fill="#232323" stroke="currentColor" strokeWidth="1.800" /><path d="M11.500 11L15 6l3.500 5z" /></Icon></IconBtn>
      <IconBtn aria-label="Export frame"><Icon w={22} h={20} vb="0 0 22 17"><path fillRule="evenodd" d="M1 3h5l2-3h6l2 3h5a1 1 0 0 1 1 1v12a1 1 0 0 1-1 1H1a1 1 0 0 1-1-1V4a1 1 0 0 1 1-1zm10 2a4.500 4.500 0 1 0 0 9 4.500 4.500 0 0 0 0-9zm0 2.200a2.300 2.300 0 1 1 0 4.600 2.300 2.300 0 0 1 0-4.600z" /></Icon></IconBtn>
      <IconBtn aria-label="Comparison view"><Icon w={29} h={27} vb="0 0 29 23"><path d="M0 0h16v14H0z" /><path d="M2 1v12M14 1v12" stroke="#232323" strokeWidth="1.200" strokeDasharray="2 1.500" /><path d="M13 10h15v12H13z" fill="#232323" stroke="currentColor" strokeWidth="1.500" /><path d="M15.500 11v11M25.500 11v11" stroke="currentColor" strokeWidth="1.600" strokeDasharray="2 1.500" /><path d="M13 10h3v4h-3z" /></Icon></IconBtn>
      <IconBtn aria-label="Toggle proxies"><Icon w={24} h={24} vb="0 0 24 21"><path d="M0 0h13v7l-4 4-3-4-3 3-3-3zM12 12h11v8H12z" /><path d="M16 2c3 .5 5 3 5 6M8 19c-3-.5-5-3-5-6" fill="none" stroke="currentColor" strokeWidth="1.800" /><path d="M17.500 7h7L21 11zM-.5 13.500h7L3 9.500z" /></Icon></IconBtn>
      <IconBtn aria-label="Grid"><Icon w={22} h={24}><path d="M7 0v24M13 0v24M0 8h22M0 15h22" fill="none" stroke="currentColor" strokeWidth="1.700" /></Icon></IconBtn>
      <IconBtn aria-label="Rulers"><Icon w={22} h={25}><path d="M0 0h22v7.500H6.500V25H0z" /><path d="M10 3v3M13.500 3v3M17 3v3M2.500 11h3M2.500 15h3M2.500 19h3" stroke="#232323" strokeWidth="1.400" /></Icon></IconBtn>
      <Spacer $w={29} />
      <IconBtn aria-label="Button editor"><Icon w={17} h={17}><path d="M6 0h5v6h6v5h-6v6H6v-6H0V6h6z" /></Icon></IconBtn>
    </Transport>
  </ProgramPanel>
);

const Tools = () => (
  <ToolPanel>
    <ToolGrid>
      <Tool $on aria-label="Selection"><Icon w={18} h={24}><path d="M0 0l18 16.500-9.500.500L0 24z" /></Icon></Tool>
      <Tool $more aria-label="Track select forward"><Icon w={26} h={18}><path d="M1 1h13v15H1z" fill="none" stroke="currentColor" strokeWidth="1.600" strokeDasharray="4 2.500" /><path d="M9 7h10V3.500L26 8.500 19 14v-3.500H9z" /></Icon></Tool>
      <Tool $more aria-label="Ripple edit"><Icon w={29} h={21}><path d="M13 0h3v21h-3zM0 10.500L10 5v11zM29 10.500L19 5v11zM9 9.500h11v2H9z" /></Icon></Tool>
      <Tool aria-label="Razor"><Icon w={23} h={22}><g transform="rotate(42 11.500 11)"><path fillRule="evenodd" d="M1 5h21v12H1zM5 10v2.500h3v-1.500h2v1.500h3v-1.500h2v1.500h3V10h-3v1h-2v-1h-3v1H8v-1z" /></g></Icon></Tool>
      <Tool $more aria-label="Slip"><Icon w={31} h={21}><path d="M0 0h3v21H0zM28 0h3v21h-3zM5 10.500L11 5v11zM26 10.500L20 5v11zM9 9.500h13v2H9z" /></Icon></Tool>
      <Tool aria-label="Pen"><Pen /></Tool>
      <Tool $more aria-label="Rectangle"><Icon w={25} h={21}><rect x="1" y="1" width="23" height="19" fill="#454545" stroke="currentColor" strokeWidth="1.600" /></Icon></Tool>
      <Tool $more aria-label="Hand"><Icon w={24} h={24}><path d="M5 4.500c1-.8 2 0 2.200 1l1.600 5L8.500 2c.2-1.500 2.300-1.500 2.600 0l.6 8 1-8.500c.3-1.500 2.400-1.300 2.400.2l-.2 9 2.300-6.500c.6-1.300 2.500-.6 2.200.7L17.500 13l2.700-2.800c1-1 2.800-.2 2 1.300L18 18.500c-1.500 3-3 5.300-7 5.300-3.500 0-5.300-2-6.500-4.800L.7 13c-.6-1.600 1-2.400 2.300-1.300l3 2.800L4.300 6c-.1-.6.2-1.200.7-1.500z" /></Icon></Tool>
      <Tool $more aria-label="Type"><Icon w={21} h={21}><path d="M0 0h21v6h-2.500l-.8-3H12v15.500h3V21H6v-2.500h3V3H3.300l-.8 3H0z" /></Icon></Tool>
    </ToolGrid>
  </ToolPanel>
);

const Timeline = () => (
  <TimelinePanel>
    <TabRow $pad={17} $h={46}>
      <Icon w={8} h={8}><path d="M0.500 0.500l7 7M7.500 0.500l-7 7" stroke="currentColor" strokeWidth="1.500" /></Icon>
      <PanelTab $on $ml={14}>Sequence 01 <Burger /></PanelTab>
    </TabRow>
    <TimeGrid>
      <HeadTop>
        <HeadCode><Code $size={23} $on>00:18:23:09</Code></HeadCode>
        <HeadTools>
          <IconBtn $w={51} $color={C.play} aria-label="Insert as nest"><Icon w={22} h={21}><path d="M0 8h7v3H0zM3 13h6v3H3zM13 8h7v3h-7zM10 0h3v7h-3zM10 14h5v3h-5zM17 14h4v3h-4zM6 18h6v2.500H6zM14 18h5v2.500h-5z" /><path d="M1 2l20 18" stroke="#232323" strokeWidth="4" /><path d="M3 2.500l18 17" stroke="currentColor" strokeWidth="1.700" /></Icon></IconBtn>
          <IconBtn $w={51} $color={C.play} aria-label="Snap"><Icon w={18} h={18}><path d="M0 9a9 9 0 0 1 18 0v4h-5V9a4 4 0 0 0-8 0v4H0z" /><path d="M0 13h5v5H0zM13 13h5v5h-5z" fill="#1f5588" /></Icon></IconBtn>
          <IconBtn $w={51} $color={C.play} aria-label="Linked selection"><Icon w={22} h={20}><path d="M0 0h6v7H0zM8 0h14v7H8zM0 10h6v7H0z" /><path d="M2 12h4v3H2z" fill="#232323" /><path d="M8 2v18l5-5h7z" stroke="#232323" strokeWidth="1" /></Icon></IconBtn>
          <IconBtn $w={51} aria-label="Add marker"><Icon w={12} h={14}><path d="M1 0h10l1 1v8l-6 5-6-5V1z" /></Icon></IconBtn>
          <IconBtn $w={51} aria-label="Display settings"><Wrench /></IconBtn>
          <IconBtn $w={51} $color="#4a4a4a" aria-label="Captions"><Icon w={24} h={15}><rect width="24" height="15" rx="2" /><path d="M11 5.500a3.500 3 0 1 0 0 4M20.500 5.500a3.500 3 0 1 0 0 4" fill="none" stroke="#1e1e1e" strokeWidth="2" /></Icon></IconBtn>
        </HeadTools>
      </HeadTop>
      <TimeRuler>
        <LabelStrip $w="13.870%" $shift="-6.800%" $size={16}>
          {["00:00:00:00", "00:04:16:00", "00:08:32:00", "00:12:48:00", "00:17:04:00", "00:21:20:00", "00:25:36:00", "00:29:52:00"].map((t) => (
            <span key={t}>{t}</span>
          ))}
        </LabelStrip>
        <TimeTicks><Ticks start={0.03} step={0.9247} per={15} small={9} tall={17} /></TimeTicks>
        <RenderBar>
          <Rendered style={{ left: "0%", width: "54.35%" }} />
          <Rendered style={{ left: "61.75%", width: "5.2%" }} />
        </RenderBar>
      </TimeRuler>
      <span />

      <TrackHeads>
        <Band />
        <TrackHead name="V3" line={2} />
        <TrackHead name="V2" line={1} />
        <TrackHead name="V1" line={2} source on />
        <Split />
        <TrackHead name="A1" line={0} source on audio />
        <TrackHead name="A2" line={2} on audio />
        <TrackHead name="A3" line={1} on audio />
        <MixTrack>
          <MixInner>
            <LockIcon /><span>Mix</span><span>0,0</span>
            <Icon w={18} h={13}><path d="M0 0l7 5h4l7-5v13l-7-5H7l-7 5z" /></Icon>
          </MixInner>
        </MixTrack>
      </TrackHeads>
      <TrackArea>
        <Band />
        <Track $line={2} />
        <Track $line={1} />
        <Track $line={2}>
          <Clip style={{ left: "0%", width: "54.35%" }}>
            <ClipCorner /><ClipCorner right />
            <FxBadge>fx</FxBadge>
            <ClipName>7.MP4 [V]</ClipName>
          </Clip>
          {smallClips.map((c) => (
            <Clip key={c.left} $picked={c.picked} style={{ left: `${c.left}%`, width: `${c.width}%` }}>
              {!c.picked && <ClipCorner />}
              {!c.picked && <ClipCorner right />}
            </Clip>
          ))}
        </Track>
        <Split />
        <Track $line={0}>
          <Clip $tall style={{ left: "0%", width: "54.35%" }}>
            <Wave viewBox="0 0 809 38" preserveAspectRatio="none" aria-hidden="true">
              <path d={waveD} fill={C.wave} />
              <path d="M0 17.500h809" stroke="#8f9aa5" />
              <path d="M0 34.500h809" stroke="#0a0a0a" strokeWidth="1.500" />
              <path d="M0 36.500h809" stroke="#34485f" strokeWidth="3" />
            </Wave>
            <ClipCorner /><ClipCorner right />
            <FxBadge>fx</FxBadge>
          </Clip>
        </Track>
        <Track $line={2} />
        <Track $line={1} />
        <MixTrack />
        <Playhead style={{ left: "59.85%" }}>
          <svg width="17" height="21" viewBox="0 0 17 21"><path d="M0 0h17v12l-6 8H6l-6-8z" fill={C.play} /><path d="M8.500 15v6" stroke="#111" strokeWidth="2" /></svg>
        </Playhead>
      </TrackArea>
      <VBars>
        <VBar $h={123}><Ring /><Ring /></VBar>
        <VBar $h={127}><Ring /><Ring /></VBar>
      </VBars>
    </TimeGrid>
    <TimeScroll><HBar $used="98%"><span><Ring /><Ring /></span></HBar></TimeScroll>
  </TimelinePanel>
);

const Meter = () => (
  <MeterPanel>
    <MeterBar />
    <MeterTicks>
      {meterTicks.map((t) => <line key={t.y} x1="0" x2={t.major ? 6 : 2} y1={t.y} y2={t.y} />)}
    </MeterTicks>
    <MeterLabels>
      {["0", "-6", "-12", "-18", "-24", "-30", "-36", "-42", "-48", "-54", "dB"].map((l) => <li key={l}>{l}</li>)}
    </MeterLabels>
  </MeterPanel>
);

const EssentialGraphics = () => (
  <EssentialPanel>
    <TabRow $pad={16} $h={62}><PanelTab $on>Essential Graphics <Burger /></PanelTab></TabRow>
    <SubTabs>
      <SubTab>Browse</SubTab>
      <SubTab $on>Edit</SubTab>
    </SubTabs>
    <LayerBox />
    <LayerTools>
      <Icon w={20} h={16}><path d="M0 0h8v1.500H0zM0 3h20v13H0z" fill="#4c4c4c" /></Icon>
      <IconBtn $w={16} $h={16} aria-label="New layer"><Icon w={16} h={16}><path d="M0 0h16v16H8V8H0z" /><path d="M0 9.500h6.500V16z" /></Icon></IconBtn>
    </LayerTools>
  </EssentialPanel>
);

/* ---------- task bar programs ---------- */

const Discord = () => (
  <Icon w={36} h={36}><circle cx="18" cy="18" r="17.500" fill="#5865f2" /><path fill="#fff" fillRule="evenodd" d="M12 10.500c1.500-.8 3-1 3.800-1.200l.6 1.200h3.200l.6-1.200c.8.200 2.300.4 3.800 1.200 2.500 3.800 3.500 8 3.200 12-1.500 1.500-3.200 2.300-4.800 2.700l-1.200-2c-2 .7-4.400.7-6.400 0l-1.200 2c-1.600-.4-3.300-1.200-4.800-2.700-.3-4 .7-8.200 3.200-12zM14.700 15.500a2.200 2.400 0 1 0 0 4.800 2.200 2.400 0 0 0 0-4.800zm6.600 0a2.200 2.400 0 1 0 0 4.800 2.200 2.400 0 0 0 0-4.800z" /></Icon>
);
const Firefox = () => (
  <Icon w={36} h={36}>
    <defs><linearGradient id="ff" x1="0.8" y1="0" x2="0.2" y2="1"><stop offset="0" stopColor="#ffe13a" /><stop offset="0.45" stopColor="#ff8a1e" /><stop offset="1" stopColor="#f0216b" /></linearGradient></defs>
    <path fill="url(#ff)" d="M22 0c2 4 6 5 8 9 1 1 .5 2.500 1 3 .5-.5 1-1.500 1-2.500 2 3 3 6 3 9.500 0 9.500-7.500 16.500-17 16.500S1 28.500 1 19c0-4 1.500-8 4-10.500 0 1 .2 1.800.8 2.500C6.500 8 8 5.500 10.500 3.500c0 3 2 4.500 5 5 1.500-1 4-1 5-3C21 4 21.500 2 22 0z" />
    <circle cx="18.500" cy="19" r="7.500" fill="#7b3fe4" /><path fill="#ff9a2e" d="M8 15c3-3 6 0 9 0 2 0 2 2 0 3-3 1-3 4 0 5 3 1 7-1 8-4 1 6-3 10-8 10-6 0-10-6-9-14z" />
  </Icon>
);
const Explorer = () => (
  <Icon w={34} h={28}><path fill="#e8a33d" d="M0 0h12l3 4H0z" /><path fill="#ffd869" d="M0 4h14l2-3h17v25H0z" /><path fill="#3b8fd6" d="M5 28V15h24v13h-6v-7H11v7z" /></Icon>
);
const Monitor = () => (
  <Icon w={36} h={34}><path fill="#b9c0c4" d="M3 8l20-7 3 17L7 25z" /><path fill="#e8ecee" d="M9 7l25-4v18l-23 3z" /><path fill="#cfe0ea" d="M12 10l19-3v12l-18 2z" /><path d="M13 17l3-1 2-5 3 8 3-8 2 5 4-3" fill="none" stroke="#3c82ab" strokeWidth="1.600" /><ellipse cx="21" cy="29" rx="8" ry="4" fill="#c9cdd0" /></Icon>
);
const FlStudio = () => (
  <Icon w={36} h={36}><circle cx="18" cy="18" r="16.500" fill="#34383b" stroke="#60666a" strokeWidth="2" /><path fill="#ff9126" d="M12 14c0-5 5-6 8-4 5-1 6 2 5 7-1 7-4 16-9 17-4-2-5-13-4-20z" /><path fill="#ffc34d" d="M14 16c1-3 3-3 4-1-2 4-2 8-2 12-2-3-3-7-2-11z" /><path fill="#6cc04a" d="M10 9c3-5 8-4 9-1 1-3 4-6 8-6-1 2-2 3-4 5 3 0 5 2 5 4-4 0-7-1-9-2-3 3-6 3-9 0z" /></Icon>
);
const Spotify = () => (
  <Icon w={34} h={34}><circle cx="17" cy="17" r="16.500" fill="#1ed760" /><path d="M7.500 11.500c6.500-2 13.500-1.300 19 1.900M8.500 17c5.500-1.600 11.300-1 16 1.700M9.500 22c4.500-1.200 9-.8 13 1.500" fill="none" stroke="#17191a" strokeWidth="2.700" strokeLinecap="round" /></Icon>
);
const Cinema = () => (
  <Icon w={34} h={34}><defs><radialGradient id="c4" cx="0.35" cy="0.3" r="0.8"><stop offset="0" stopColor="#93a8e8" /><stop offset="0.6" stopColor="#1d2f80" /><stop offset="1" stopColor="#0a1033" /></radialGradient></defs><circle cx="17" cy="17" r="16.500" fill="#d5d9e4" /><circle cx="18" cy="18" r="13" fill="url(#c4)" /><path fill="#eef1f8" d="M27 3c-7-1-14 5-13 12 0 5 4 8 9 7 5-2 7-7 7-12z" opacity="0.9" /><circle cx="20" cy="18" r="8" fill="#12205e" /></Icon>
);
const KeyLock = () => (
  <Icon w={36} h={36}><circle cx="18" cy="18" r="16.500" fill="#a9c3f5" stroke="#0b0b12" strokeWidth="2.500" /><path d="M12.500 17v-5a5.500 5.500 0 0 1 11 0v5" fill="none" stroke="#141824" strokeWidth="3" /><path fill="#141824" d="M9 16h18v3.500H9zM10 20.500h16V23H10zM10 24h16v3H10z" /></Icon>
);
const Snip = () => (
  <Icon w={38} h={36}><ellipse cx="13" cy="22" rx="10" ry="5" fill="#a9a3a3" /><ellipse cx="19" cy="12" rx="13" ry="9" fill="#f4f4f4" stroke="#e04848" strokeWidth="1.600" transform="rotate(-30 19 12)" /><path d="M18 4l5 22M31 10L18 21" stroke="#7a8288" strokeWidth="2" /><ellipse cx="22" cy="30" rx="3" ry="4.500" fill="none" stroke="#2f8ecb" strokeWidth="2.500" /><ellipse cx="30" cy="25" rx="4" ry="3.500" fill="none" stroke="#2f8ecb" strokeWidth="2.500" /></Icon>
);

const Taskbar = () => (
  <TaskBar>
    <StartBtn aria-label="Start"><Icon w={24} h={24}><path d="M0 3.500L10.500 2v9.500H0zM12 1.800L24 0v11.500H12zM0 13h10.500v9.500L0 21zM12 13h12v11l-12-1.800z" /></Icon></StartBtn>
    <SearchBox>
      <Icon w={26} h={26}><circle cx="16" cy="9.500" r="8" fill="none" stroke="currentColor" strokeWidth="1.800" /><path d="M10.500 15.500L1 25" stroke="currentColor" strokeWidth="1.800" /></Icon>
      <input type="text" placeholder="Type here to search" aria-label="Search" />
    </SearchBox>
    <TaskIcon aria-label="Task view"><Icon w={25} h={24}><path d="M1 0v4h16V0M1 24v-4h16v4M1 7h16v10H1zM23.500 0v6M23.500 11v13" fill="none" stroke="#fff" strokeWidth="1.400" /><path d="M22 7h3v3h-3z" /></Icon></TaskIcon>
    <TaskIcon aria-label="Discord"><Discord /></TaskIcon>
    <TaskIcon $open aria-label="Firefox"><Firefox /></TaskIcon>
    <TaskIcon $open $stack aria-label="File Explorer"><Explorer /></TaskIcon>
    <TaskIcon aria-label="System monitor"><Monitor /></TaskIcon>
    <TaskIcon><AppBadge $size={33} $bg="#001d34" $fg="#31a8ff" $font={18}>Ps</AppBadge></TaskIcon>
    <TaskIcon aria-label="FL Studio"><FlStudio /></TaskIcon>
    <TaskIcon><AppBadge $size={33} $bg="#00005b" $fg="#a9a1ff" $font={18}>Ae</AppBadge></TaskIcon>
    <TaskIcon $open aria-label="Spotify"><Spotify /></TaskIcon>
    <TaskIcon aria-label="Cinema 4D"><Cinema /></TaskIcon>
    <TaskIcon $open $active><AppBadge $size={33} $bg="#00005b" $fg="#9a99ff" $font={18}>Pr</AppBadge></TaskIcon>
    <TaskIcon aria-label="Password manager"><KeyLock /></TaskIcon>
    <TaskIcon><AppBadge $size={30} $bg="#232a28" $fg="#fff" $font={11}>Live</AppBadge></TaskIcon>
    <TaskIcon $open aria-label="Snipping tool"><Snip /></TaskIcon>
    <Tray>
      <Icon w={18} h={11}><path d="M1 10l8-8 8 8" fill="none" stroke="#fff" strokeWidth="1.600" /></Icon>
      <Icon w={15} h={24}><rect x="2" y="0" width="11" height="18" rx="2" /><path d="M1 12v5a3 3 0 0 0 3 3h7a3 3 0 0 0 3-3v-5M7.500 20v4M4 23.500h7" fill="none" stroke="#fff" strokeWidth="1.300" /></Icon>
      <Icon w={24} h={17}><path d="M1 3h7v4c0 2-1 3-3.500 3S1 9 1 7zM2 0h1.500v3H2zM5.500 0H7v3H5.500z" /><path d="M8 5h13v11H5v-6" fill="none" stroke="#fff" strokeWidth="1.400" /><path d="M9 7h10v7H7v-3zM22 8h2v5h-2z" /></Icon>
      <Icon w={19} h={19}><path d="M1 19C1 9 9 1 19 1M6 19C6 12 12 6 19 6M11 19c0-4.500 3.500-8 8-8" fill="none" stroke="#cdbcbc" strokeWidth="1.300" /><circle cx="17" cy="17" r="2" /></Icon>
      <Icon w={23} h={18}><path d="M1 6h4l6-5v16l-6-5H1z" fill="none" stroke="#fff" strokeWidth="1.400" /><path d="M14 6c1.500 2 1.500 4 0 6M17 3.500c3 3.500 3 7.500 0 11M20 1c4 5 4 11 0 16" fill="none" stroke="#fff" strokeWidth="1.200" /></Icon>
      <span>ENG</span>
      <Clock><span>16:29</span><span>26/09/2023</span></Clock>
      <Icon w={25} h={25}><path d="M1 1h23v18h-8l-3.500 4.500L9 19H1z" fill="none" stroke="#fff" strokeWidth="1.500" /></Icon>
      <DesktopEdge />
    </Tray>
  </TaskBar>
);

export default function App() {
  return (
    <Page>
      <GlobalStyle />
      <WindowBar>
        <TitleRow>
          <AppBadge $size={20} $bg="#00005b" $fg="#b9b8ff" $font={11}>Pr</AppBadge>
          <TitleText>Adobe Premiere Pro 2023 - C:\Users\w4ke0pp\Documents\Adobe\Premiere Pro\23.0\podcast edit bouw w4ke0pp.prproj *</TitleText>
          <IconBtn $w={70} $h={34} $color="#111" aria-label="Minimize"><Icon w={16} h={16}><path d="M0 7.500h16v1H0z" /></Icon></IconBtn>
          <IconBtn $w={70} $h={34} $color="#111" aria-label="Restore"><Icon w={16} h={16}><path d="M0.500 3.500h12v12h-12zM3.500 3.500v-3h12v12h-3" fill="none" stroke="currentColor" /></Icon></IconBtn>
          <IconBtn $w={73} $h={34} $color="#111" aria-label="Close"><Icon w={16} h={16}><path d="M0.500 0.500l15 15M15.500 0.500l-15 15" stroke="currentColor" /></Icon></IconBtn>
        </TitleRow>
        <MenuRow>{menus.map(([k, rest]) => <button key={k + rest}><u>{k}</u>{rest}</button>)}</MenuRow>
      </WindowBar>
      <AppHeader>
        <ModeTabs>
          <HomeBtn aria-label="Home"><Icon w={27} h={24}><path d="M13.500 0L27 13v2h-4v9h-6.500v-8h-6v8H4v-9H0v-2z" /></Icon></HomeBtn>
          <ModeTab>Import</ModeTab>
          <ModeTab $on>Edit</ModeTab>
          <ModeTab>Export</ModeTab>
        </ModeTabs>
        <DocTitle>podcast edit bouw w4ke0pp <span>- Edited</span></DocTitle>
        <HeaderIcons>
          <IconBtn aria-label="Workspaces"><Icon w={25} h={24}><path d="M14 4H1.500v18.500h22V13" fill="none" stroke="currentColor" strokeWidth="1.600" /><path d="M1 3h13v3H1z" /><path d="M4 9h4v9H4zM4 12h4M4 15h4" fill="none" stroke="currentColor" strokeWidth="1.200" /><circle cx="20" cy="6" r="5" fill={C.play} /></Icon></IconBtn>
          <IconBtn aria-label="Quick export"><Icon w={25} h={24}><path d="M8 7H1.500v15.500h22V7H17" fill="none" stroke="currentColor" strokeWidth="2.800" /><path d="M12.500 0l5.500 6h-4v9h-3V6H7z" /></Icon></IconBtn>
          <IconBtn aria-label="Progress"><Icon w={25} h={22}><rect y="1" width="25" height="5" rx="2.500" /><rect y="8.500" width="25" height="5" rx="2.500" /><rect y="16" width="25" height="5" rx="2.500" /><path d="M9 3.500h14M15 11h8M12 18.500h11" stroke="#232323" strokeWidth="1.600" /></Icon></IconBtn>
          <IconBtn aria-label="Full screen"><Icon w={26} h={26}><path d="M16 1h9v9l-3-3-4 4-3-3 4-4zM1 16v9h9l-3-3 4-4-3-3-4 4z" /></Icon></IconBtn>
        </HeaderIcons>
      </AppHeader>
      <Workspace>
        <MainColumn>
          <TopRow>
            <EffectControls />
            <ProgramMonitor />
          </TopRow>
          <BottomRow>
            <Tools />
            <Timeline />
            <Meter />
          </BottomRow>
        </MainColumn>
        <EssentialGraphics />
      </Workspace>
      <StatusBar>
        <Icon w={24} h={18}><path fillRule="evenodd" d="M9 1.500C4 1.500.5 5 .5 9.500S4 17.500 8.500 17.500h7c4.500 0 8-3.500 8-8.200S20 .5 15.500.5c-2.500 0-4.500.5-6.500 1zM8 3.500C4.500 4 2.500 6.500 2.500 9.500c0 3.300 2.700 6 6 6h7c3.300 0 6-2.700 6-6.200 0-3.800-2.700-6.800-6-6.800-3 0-5 1.500-7.500 1z" /><path d="M7 12.500c-4-1-3.500-6.500.5-6.500 2.500 0 3.500 2 5 4s3 2.500 4.500 1.500 1.500-4-1-4.500M10 5.500c3-2.500 8-2 9 2s-2 7-5.500 6" fill="none" stroke="currentColor" strokeWidth="2" /></Icon>
      </StatusBar>
      <Taskbar />
      <Ink viewBox="0 0 2560 1440" preserveAspectRatio="none" aria-hidden="true">
        <path d="M92 131c2 8 3 14 8 26M85 148c8-4 14-9 26-10" />
        <path d="M400 135l2 17c6-14 12-24 24-34" />
        <path d={loopStroke} />
        <path d="M438 212c4-8 12-14 23-15" strokeWidth="7" />
        <path d="M461 197c10 0 16 1 26 4 8 2 12 2 19 3" />
        <path d={longStroke} />
      </Ink>
    </Page>
  );
}
